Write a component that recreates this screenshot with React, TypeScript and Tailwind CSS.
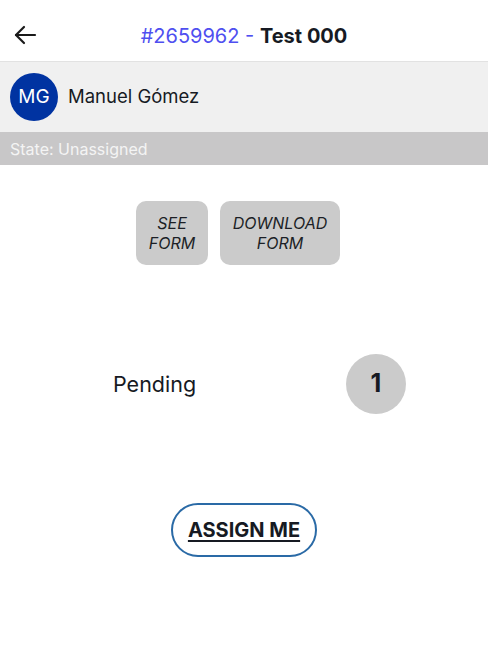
import React from "react";

export default function App() {
  return (
    <div className="w-[488px] h-[656px] bg-white flex flex-col" style={{ fontFamily: "Inter, 'Noto Sans', sans-serif" }}>
      <div className="h-[62px] flex items-center relative border-b border-[#e2e2e2]">
        <div className="absolute left-[13px] top-[24px]">
          <svg width="24" height="22" viewBox="0 0 24 22" fill="none" stroke="#1a1a1a" strokeWidth="2.2" strokeLinecap="round" strokeLinejoin="round">
            <path d="M22 11H3" />
            <path d="M11 3L3 11L11 19" />
          </svg>
        </div>
        <div className="w-full text-center text-[20px] pt-[10px] leading-none">
          <span className="text-[#4f4ff0]">#2659962 - </span>
          <span className="font-bold text-[#161a23]">Test 000</span>
        </div>
      </div>
      <div className="h-[70px] bg-[#f0f0f0] flex items-center pl-[10px] gap-[10px]">
        <div className="w-[48px] h-[48px] rounded-full bg-[#0033a1] flex items-center justify-center text-white text-[19px]">MG</div>
        <div className="text-[18.5px] text-[#161a23]">Manuel Gómez</div>
      </div>
      <div className="h-[33px] bg-[#c8c7c8] flex items-center pl-[10px] text-[16px] text-[#f4f4f4]">State: Unassigned</div>
      <div className="flex justify-center gap-[12px] mt-[36px] pr-[12px]">
        <div className="w-[72px] h-[64px] rounded-[10px] bg-[#cbcbcb] flex items-center justify-center text-center italic text-[16px] leading-[20px] text-[#1c1f26]">SEE<br />FORM</div>
        <div className="w-[120px] h-[64px] rounded-[10px] bg-[#cbcbcb] flex items-center justify-center text-center italic text-[16px] leading-[20px] text-[#1c1f26]">DOWNLOAD<br />FORM</div>
      </div>
      <div className="flex items-center mt-[89px] h-[60px]">
        <div className="ml-[113px] w-[233px] text-[21.5px] text-[#161a23]">Pending</div>
        <div className="w-[60px] h-[60px] rounded-full bg-[#cbcbcb] flex items-center justify-center text-[25px] font-bold text-[#161a23]">1</div>
      </div>
      <div className="flex justify-center mt-[89px]">
        <div className="w-[146px] h-[54px] rounded-full border-2 border-[#2a6aa6] flex items-center justify-center text-[20px] font-bold underline underline-offset-[3px] text-[#161a23]">ASSIGN ME</div>
      </div>
    </div>
  );
}
